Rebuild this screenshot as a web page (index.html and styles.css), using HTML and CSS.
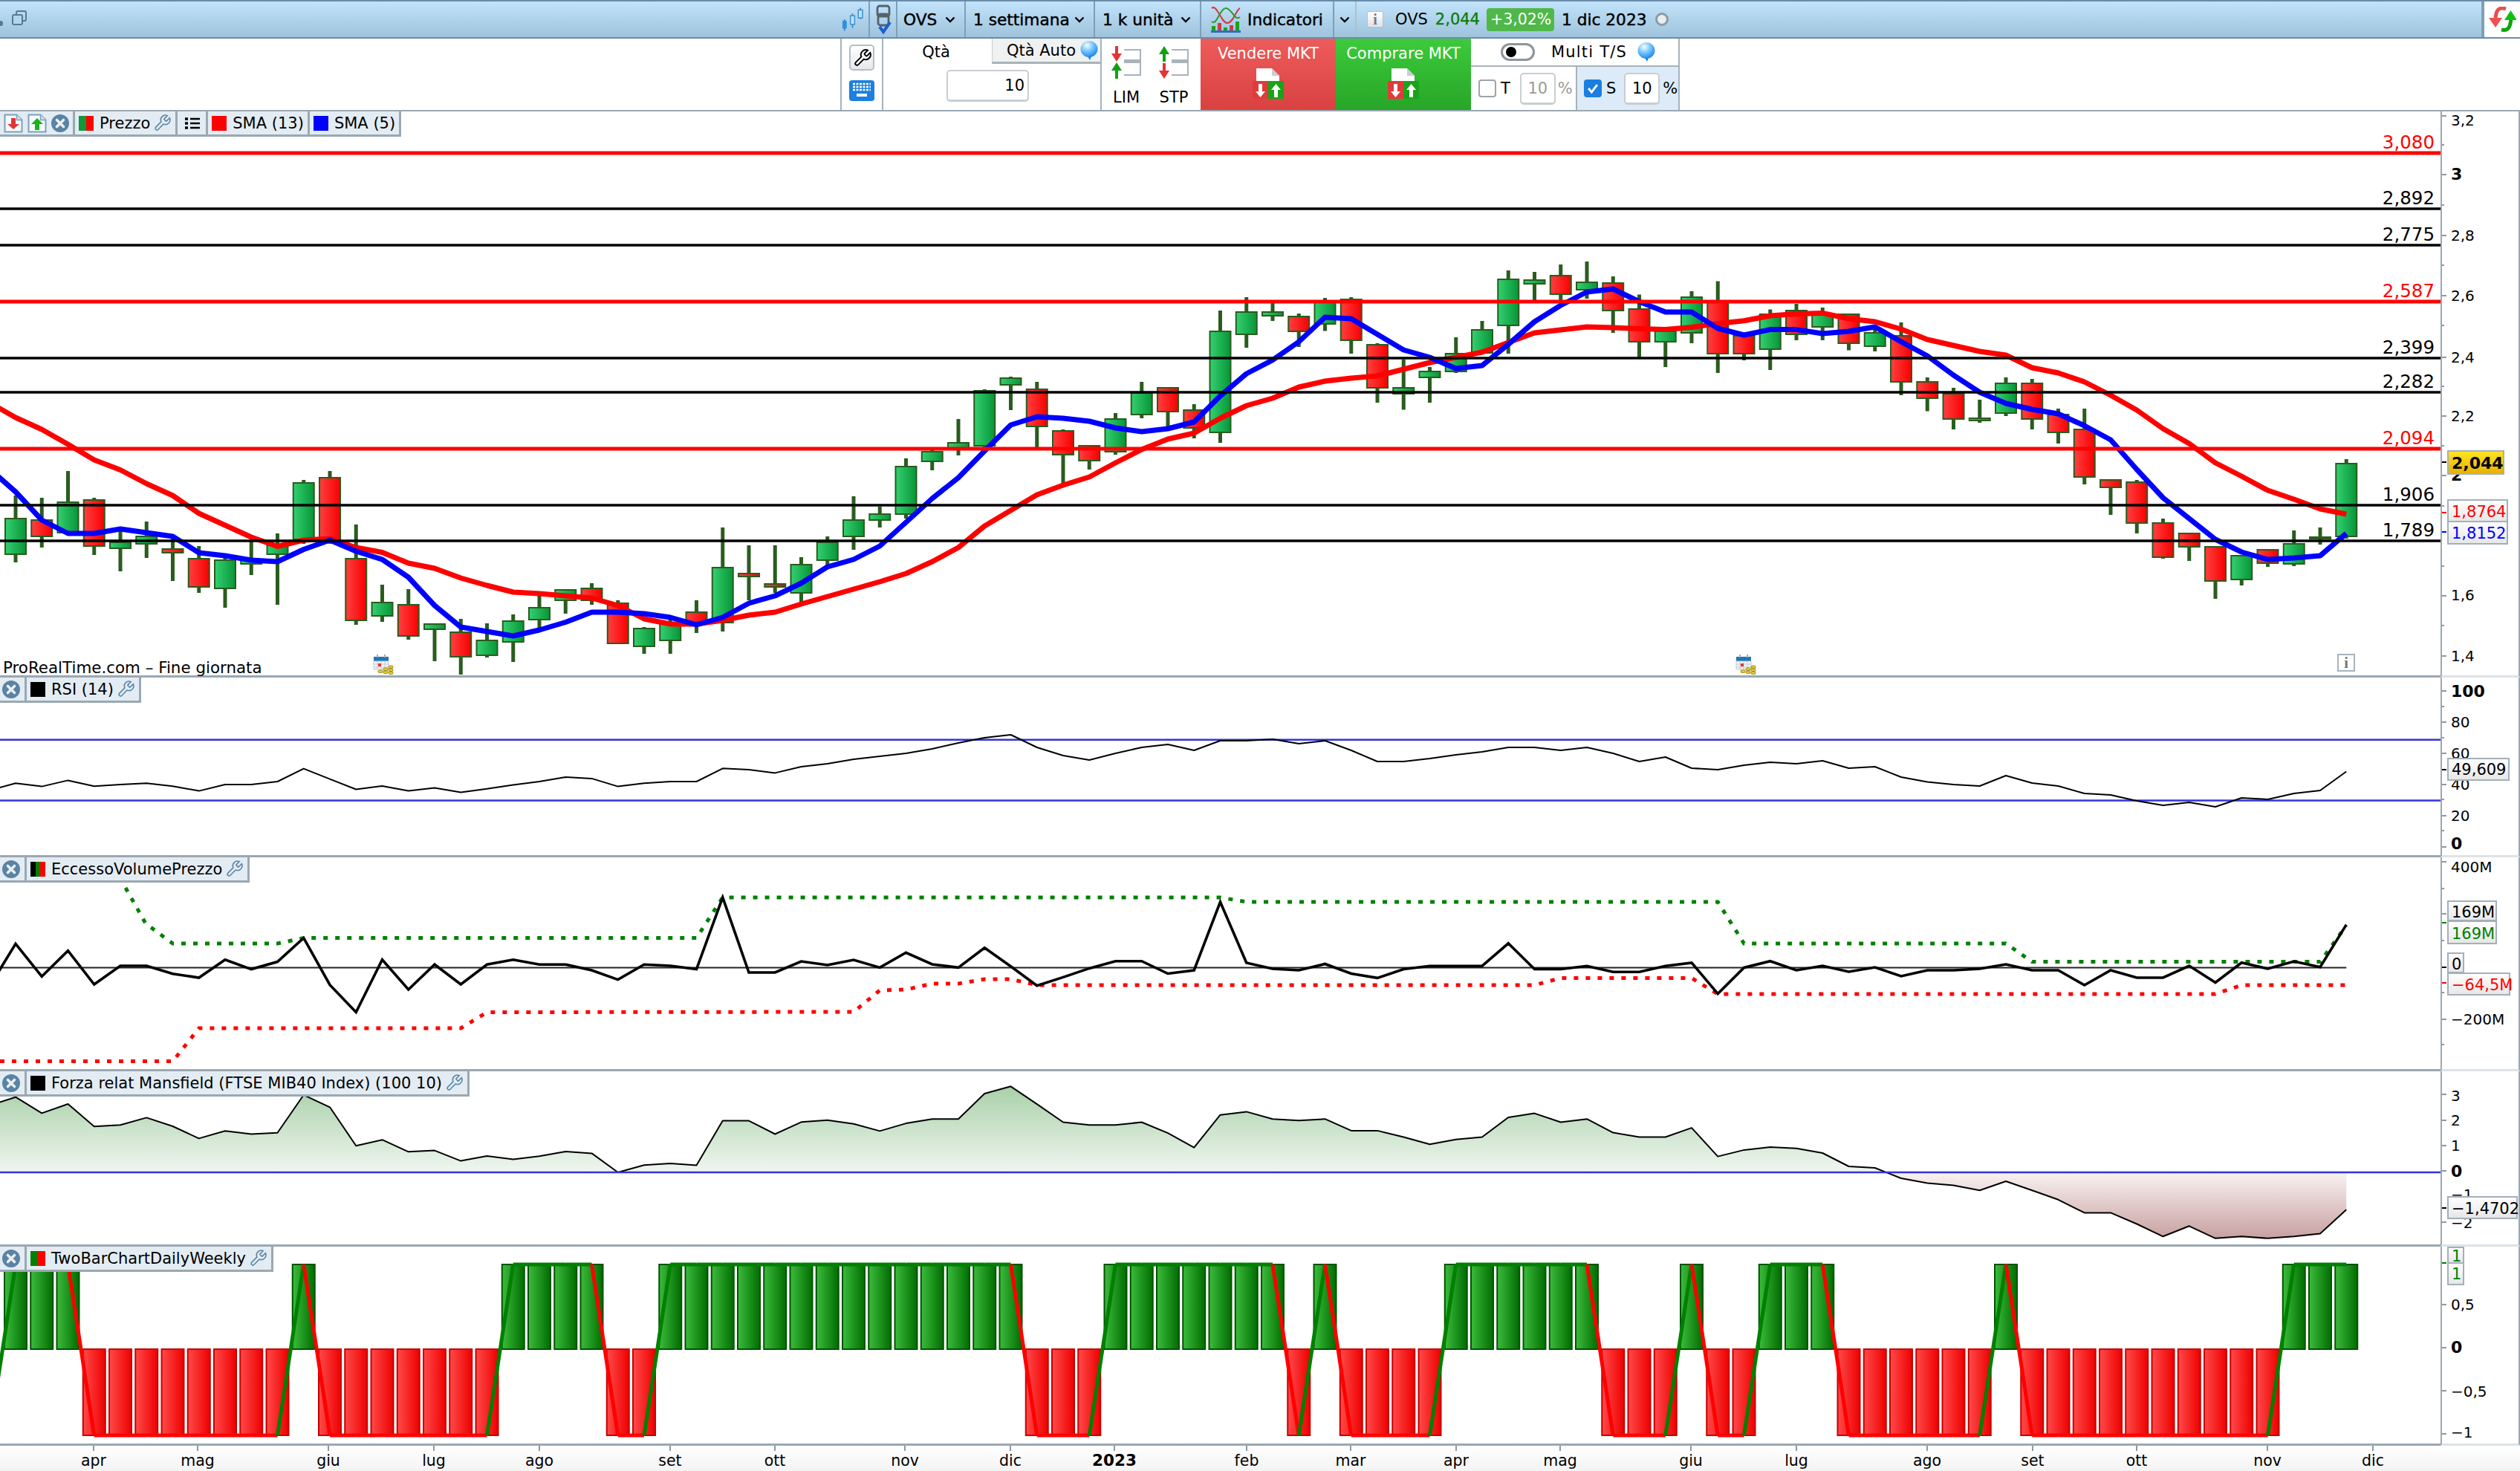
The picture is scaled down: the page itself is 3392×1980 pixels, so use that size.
FILE: index.html
```html
<!DOCTYPE html>
<html lang="it">
<head>
<meta charset="utf-8">
<title>OVS - ProRealTime</title>
<link rel="stylesheet" href="styles.css">
</head>
<body>
<svg class="defs" aria-hidden="true">
  <defs>
    <linearGradient id="g-up" x1="0" x2="1" y1="0" y2="0"><stop offset="0" stop-color="#34d071"/><stop offset="1" stop-color="#079537"/></linearGradient>
    <linearGradient id="g-down" x1="0" x2="1" y1="0" y2="0"><stop offset="0" stop-color="#ff4040"/><stop offset="1" stop-color="#f80000"/></linearGradient>
    <linearGradient id="g-bar-up" x1="0" x2="1" y1="0" y2="0"><stop offset="0" stop-color="#3cbc3c"/><stop offset="1" stop-color="#006c00"/></linearGradient>
    <linearGradient id="g-bar-down" x1="0" x2="1" y1="0" y2="0"><stop offset="0" stop-color="#ff4a4a"/><stop offset="1" stop-color="#ee0000"/></linearGradient>
    <linearGradient id="g-tag" x1="0" x2="0" y1="0" y2="1"><stop offset="0" stop-color="#ffffff"/><stop offset="1" stop-color="#e6e6e6"/></linearGradient>
    <linearGradient id="g-last" x1="0" x2="0" y1="0" y2="1"><stop offset="0" stop-color="#ffe623"/><stop offset="1" stop-color="#e6b000"/></linearGradient>
    <linearGradient id="g-pos" gradientUnits="userSpaceOnUse" x1="0" x2="0" y1="1462" y2="1578"><stop offset="0" stop-color="#a8d0a8"/><stop offset="1" stop-color="#f0f6f0"/></linearGradient>
    <linearGradient id="g-neg" gradientUnits="userSpaceOnUse" x1="0" x2="0" y1="1578" y2="1667"><stop offset="0" stop-color="#f9f2f2"/><stop offset="1" stop-color="#c8a0a0"/></linearGradient>
    <radialGradient id="g-bubble" cx="0.38" cy="0.28" r="0.8"><stop offset="0" stop-color="#ffffff"/><stop offset="0.35" stop-color="#8fd2ff"/><stop offset="1" stop-color="#0a7fe8"/></radialGradient>
    <symbol id="i-wrench" viewBox="0 0 24 24"><path d="M14.7 6.3a1 1 0 0 0 0 1.4l1.6 1.6a1 1 0 0 0 1.4 0l3.77-3.77a6 6 0 0 1-7.94 7.94l-6.91 6.91a2.12 2.12 0 0 1-3-3l6.91-6.91a6 6 0 0 1 7.94-7.94l-3.76 3.76z"/></symbol>
    <symbol id="i-close" viewBox="0 0 24 24"><circle cx="12" cy="12" r="12" fill="#5a83a4"/><path d="M7.5 7.5l9 9M16.5 7.5l-9 9" stroke="#e8eff4" stroke-width="3.6" stroke-linecap="round"/></symbol>
    <symbol id="i-doc-down" viewBox="0 0 26 26"><path d="M1.5 1.5h16l7 7v16h-23z" fill="#f6f9fb" stroke="#7ba0bd" stroke-width="2"/><path d="M17.5 1.5v7h7" fill="#d6e2ea" stroke="#7ba0bd" stroke-width="1.5"/><path d="M10 6h6v8h5l-8 7-8-7h5z" fill="#e23434"/></symbol>
    <symbol id="i-doc-up" viewBox="0 0 26 26"><path d="M1.5 1.5h16l7 7v16h-23z" fill="#f6f9fb" stroke="#7ba0bd" stroke-width="2"/><path d="M17.5 1.5v7h7" fill="#d6e2ea" stroke="#7ba0bd" stroke-width="1.5"/><path d="M13 6l8 8h-5v8h-6v-8h-5z" fill="#19b319"/></symbol>
    <symbol id="i-bubble" viewBox="0 0 24 26"><path d="M9 19l4 7 3-8z" fill="#0a7fe8"/><ellipse cx="12" cy="11" rx="11.5" ry="11" fill="url(#g-bubble)"/></symbol>
    <symbol id="i-doc-trade" viewBox="0 0 42 42"><path d="M5 1h21l10 10v16H5z" fill="#ffffff"/><path d="M5 1h21l10 10h-10V1" fill="#c9ced2"/><rect x="0" y="18" width="21" height="24" fill="#e23a3a"/><rect x="21" y="18" width="21" height="24" fill="#19a319"/><path d="M8 22h5v10h4l-6.500 8-6.500-8h4z" fill="#fff"/><path d="M31.500 22l6.500 8h-4v10h-5V30h-4z" fill="#fff"/></symbol>
  </defs>
</svg>

<header class="topbar">
  <div class="tb-cell tb-left">
    <span class="tb-dot"></span>
    <svg class="ic-window" viewBox="0 0 20 20"><rect x="6" y="1" width="13" height="13" rx="2" fill="none" stroke="#557b98" stroke-width="2"/><rect x="1" y="6" width="13" height="13" rx="2" fill="#b3d4ec" stroke="#557b98" stroke-width="2"/></svg>
    <svg class="ic-candles" viewBox="0 0 30 32"><path d="M4 16v16M15 8v20M26 0v16" stroke="#3c8fd0" stroke-width="2"/><rect x="1" y="18" width="6" height="11" fill="#2e8fe0"/><rect x="12" y="11" width="6" height="12" fill="#bfe0f8" stroke="#3c8fd0" stroke-width="1.500"/><rect x="23" y="3" width="6" height="11" fill="#bfe0f8" stroke="#3c8fd0" stroke-width="1.500"/></svg>
  </div>
  <div class="tb-cell tb-chain">
    <svg class="ic-chain" viewBox="0 0 24 40"><path d="M7 2h10a3 3 0 0 1 3 3v8a3 3 0 0 1-3 3H7a3 3 0 0 1-3-3V5a3 3 0 0 1 3-3zM8 13h8a3 3 0 0 1 3 3v9a3 3 0 0 1-3 3H8a3 3 0 0 1-3-3v-9a3 3 0 0 1 3-3z" fill="none" stroke="#56616a" stroke-width="2.800"/><path d="M7 30l5 7 9-13" fill="none" stroke="#1b5fd0" stroke-width="4"/></svg>
  </div>
  <div class="tb-cell tb-ovs"><span class="tb-strong">OVS</span><svg class="chev" viewBox="0 0 14 9"><path d="M1.500 1.500L7 7l5.500-5.500"/></svg></div>
  <div class="tb-cell tb-tf"><span class="tb-strong">1 settimana</span><svg class="chev" viewBox="0 0 14 9"><path d="M1.500 1.500L7 7l5.500-5.500"/></svg></div>
  <div class="tb-cell tb-units"><span class="tb-strong">1 k unità</span><svg class="chev" viewBox="0 0 14 9"><path d="M1.500 1.500L7 7l5.500-5.500"/></svg></div>
  <div class="tb-cell tb-ind">
    <svg class="ic-ind" viewBox="0 0 40 38"><path d="M1 4C8 -2 14 24 22 24S34 6 39 4" fill="none" stroke="#d43a3a" stroke-width="2"/><path d="M1 22C8 28 12 4 20 4S32 22 39 16" fill="none" stroke="#2d9a2d" stroke-width="2"/><rect x="1" y="28" width="5" height="6" fill="#19a319"/><rect x="9" y="24" width="5" height="10" fill="#d43a3a"/><rect x="17" y="30" width="5" height="4" fill="#19a319"/><rect x="25" y="27" width="5" height="7" fill="#d43a3a"/><rect x="33" y="22" width="5" height="12" fill="#19a319"/><rect x="0" y="34" width="40" height="3" fill="#2a6fc0"/></svg>
    <span class="tb-strong">Indicatori</span>
  </div>
  <div class="tb-cell tb-chevonly"><svg class="chev" viewBox="0 0 14 9"><path d="M1.500 1.500L7 7l5.500-5.500"/></svg></div>
  <div class="tb-cell tb-quote">
    <span class="ic-info">i</span>
    <span class="q-name">OVS</span>
    <span class="q-price">2,044</span>
    <span class="q-change">+3,02%</span>
    <span class="tb-strong">1 dic 2023</span>
    <span class="q-ring"></span>
  </div>
  <div class="tb-cell tb-refresh">
    <svg class="ic-refresh" viewBox="0 0 38 34"><path d="M24 3C15 0 10 4 10 18" fill="none" stroke="#e85050" stroke-width="5"/><path d="M1 15h18l-9 13z" fill="#f25050"/><path d="M18 31c9 2 12-3 13-15" fill="none" stroke="#08a808" stroke-width="5"/><path d="M22 18h17L30.500 5z" fill="#10c010"/></svg>
  </div>
</header>

<section class="orderbar">
  <div class="ob-cell ob-tools">
    <button class="btn-wrench"><svg class="ic-wrench-black" viewBox="0 0 24 24"><use href="#i-wrench"/></svg></button>
    <svg class="ic-keyboard" viewBox="0 0 34 28"><rect width="34" height="28" rx="4" fill="#1b80e0"/><path d="M5 5h24M5 9h24M5 13h24" stroke="#fff" stroke-width="2.400" stroke-dasharray="3 1.500"/><rect x="10" y="18" width="14" height="4" fill="#fff"/></svg>
  </div>
  <div class="ob-cell ob-qty">
    <span class="qty-label">Qtà</span>
    <div class="qty-auto">Qtà Auto<svg class="ic-bubble" viewBox="0 0 24 26"><use href="#i-bubble"/></svg></div>
    <input class="qty-input" value="10" readonly>
  </div>
  <div class="ob-cell ob-limstp">
    <div class="ls-col">
      <svg class="ic-ls" viewBox="0 0 42 44"><path d="M18 5h22v34H18" fill="none" stroke="#a8b3ba" stroke-width="2"/><path d="M18 20.500h22" stroke="#a8b3ba" stroke-width="5"/><path d="M6 0h4v10h5l-7 11-7-11h5z" fill="#e23434"/><path d="M8 22l7 11h-5v11H6V33H1z" fill="#12a012"/></svg>
      <span>LIM</span>
    </div>
    <div class="ls-col">
      <svg class="ic-ls" viewBox="0 0 42 44"><path d="M18 5h22v34H18" fill="none" stroke="#a8b3ba" stroke-width="2"/><path d="M18 20.500h22" stroke="#a8b3ba" stroke-width="5"/><path d="M8 0l7 11h-5v10H6V11H1z" fill="#12a012"/><path d="M6 23h4v10h5l-7 11-7-11h5z" fill="#e23434"/></svg>
      <span>STP</span>
    </div>
  </div>
  <div class="ob-cell ob-sell">Vendere MKT<svg class="ic-trade" viewBox="0 0 42 42"><use href="#i-doc-trade"/></svg></div>
  <div class="ob-cell ob-buy">Comprare MKT<svg class="ic-trade" viewBox="0 0 42 42"><use href="#i-doc-trade"/></svg></div>
  <div class="ob-cell ob-multi">
    <div class="multi-top">
      <span class="toggle"><span class="toggle-dot"></span></span>
      <span class="multi-label">Multi T/S</span>
      <svg class="ic-bubble" viewBox="0 0 24 26"><use href="#i-bubble"/></svg>
    </div>
    <div class="multi-bottom">
      <div class="ms-part ms-off">
        <span class="chk"></span><span>T</span><input class="pct-input" value="10" readonly><span class="pct">%</span>
      </div>
      <div class="ms-part ms-on">
        <span class="chk chk-on"><svg viewBox="0 0 24 24"><path d="M5 12l5 6 9-12" fill="none" stroke="#fff" stroke-width="3.500"/></svg></span><span>S</span><input class="pct-input" value="10" readonly><span class="pct-on">%</span>
      </div>
    </div>
  </div>
</section>

<main class="charts">
  <section class="panel panel-main">
    <div class="plot" id="plot-main"></div>
    <div class="yaxis" id="axis-main"></div>
    <div class="legend">
      <div class="lg-cell">
        <svg class="ic-doc" viewBox="0 0 26 26"><use href="#i-doc-down"/></svg>
        <svg class="ic-doc" viewBox="0 0 26 26"><use href="#i-doc-up"/></svg>
        <svg class="ic-close" viewBox="0 0 24 24"><use href="#i-close"/></svg>
      </div>
      <div class="lg-cell"><span class="sw sw-price"></span><span class="lg-name">Prezzo</span><svg class="ic-wrench" viewBox="0 0 24 24"><use href="#i-wrench"/></svg></div>
      <div class="lg-cell lg-list"><svg class="ic-list" viewBox="0 0 20 16"><path d="M0 2h4M0 8h4M0 14h4" stroke="#000" stroke-width="3.500"/><path d="M7 2h13M7 8h13M7 14h13" stroke="#000" stroke-width="2.400"/></svg></div>
      <div class="lg-cell"><span class="sw sw-red"></span><span class="lg-name">SMA (13)</span></div>
      <div class="lg-cell"><span class="sw sw-blue"></span><span class="lg-name">SMA (5)</span></div>
    </div>
    <div class="watermark">ProRealTime.com – Fine giornata</div>
  </section>

  <section class="panel panel-rsi">
    <div class="plot" id="plot-rsi"></div>
    <div class="yaxis" id="axis-rsi"></div>
    <div class="legend">
      <div class="lg-cell lg-x"><svg class="ic-close" viewBox="0 0 24 24"><use href="#i-close"/></svg></div>
      <div class="lg-cell"><span class="sw sw-black"></span><span class="lg-name">RSI (14)</span><svg class="ic-wrench" viewBox="0 0 24 24"><use href="#i-wrench"/></svg></div>
    </div>
  </section>

  <section class="panel panel-evp">
    <div class="plot" id="plot-evp"></div>
    <div class="yaxis" id="axis-evp"></div>
    <div class="legend">
      <div class="lg-cell lg-x"><svg class="ic-close" viewBox="0 0 24 24"><use href="#i-close"/></svg></div>
      <div class="lg-cell"><span class="sw sw-evp"></span><span class="lg-name">EccessoVolumePrezzo</span><svg class="ic-wrench" viewBox="0 0 24 24"><use href="#i-wrench"/></svg></div>
    </div>
  </section>

  <section class="panel panel-mans">
    <div class="plot" id="plot-mans"></div>
    <div class="yaxis" id="axis-mans"></div>
    <div class="legend">
      <div class="lg-cell lg-x"><svg class="ic-close" viewBox="0 0 24 24"><use href="#i-close"/></svg></div>
      <div class="lg-cell"><span class="sw sw-black"></span><span class="lg-name">Forza relat Mansfield (FTSE MIB40 Index) (100 10)</span><svg class="ic-wrench" viewBox="0 0 24 24"><use href="#i-wrench"/></svg></div>
    </div>
  </section>

  <section class="panel panel-two">
    <div class="plot" id="plot-two"></div>
    <div class="yaxis" id="axis-two"></div>
    <div class="legend">
      <div class="lg-cell lg-x"><svg class="ic-close" viewBox="0 0 24 24"><use href="#i-close"/></svg></div>
      <div class="lg-cell"><span class="sw sw-two"></span><span class="lg-name">TwoBarChartDailyWeekly</span><svg class="ic-wrench" viewBox="0 0 24 24"><use href="#i-wrench"/></svg></div>
    </div>
  </section>

  <div class="timeaxis" id="time-axis"></div>
</main>
<script src="chart.js"></script>
</body>
</html>
```

FILE: styles.css
```css
* { box-sizing: border-box; }
html, body { margin: 0; padding: 0; background: #fff; }
body {
  width: 3392px; height: 1980px; overflow: hidden;
  display: flex; flex-direction: column;
  font: 21px "DejaVu Sans", "Liberation Sans", sans-serif; color: #000;
}
.defs { position: absolute; width: 0; height: 0; }

/* top bar */
.topbar {
  display: flex; height: 52px; flex: none;
  border-top: 2px solid #6b8ca8; border-bottom: 2px solid #6b8ca8;
  background: linear-gradient(#c1e3fb, #9fc3dc);
}
.tb-cell { display: flex; align-items: center; height: 100%; border-right: 2px solid #7e9fb8; flex: none; }
.tb-strong { -webkit-text-stroke: 0.45px #000; font-size: 21.7px; white-space: nowrap; }
.tb-left { width: 1171px; padding-right: 7px; }
.tb-dot { width: 4px; height: 7px; background: #557b98; border-radius: 0 3px 3px 0; margin: 10px 12px 0 0; }
.ic-window { width: 20px; height: 20px; margin-bottom: 4px; }
.ic-candles { width: 29px; height: 32px; margin-left: auto; }
.tb-chain { width: 37px; justify-content: center; }
.ic-chain { width: 24px; height: 40px; }
.tb-ovs { width: 92px; padding-left: 8px; }
.tb-tf { width: 174px; padding-left: 10px; }
.tb-units { width: 143px; padding-left: 10px; }
.chev { width: 14px; height: 9px; margin-left: auto; margin-right: 12px; flex: none; }
.chev path { fill: none; stroke: #000; stroke-width: 2.4; }
.tb-ind { width: 179px; padding-left: 13px; gap: 9px; }
.ic-ind { width: 40px; height: 38px; }
.tb-chevonly { width: 30px; border-right-color: #adbfcd; }
.tb-chevonly .chev { margin: 0 auto; }
.tb-quote { flex: 1; padding-left: 14px; }
.ic-info {
  width: 22px; height: 22px; background: linear-gradient(#fff, #dfe3e6); border: 1px solid #b7c0c6; border-radius: 2px;
  font: bold 20px/20px "Liberation Serif", serif; color: #778; text-align: center;
}
.q-name { margin-left: 16px; }
.q-price { margin-left: 10px; color: #0a7d0a; -webkit-text-stroke: 0.35px #0a7d0a; }
.q-change {
  margin-left: 9px; padding: 0 5px; height: 31px; line-height: 31px; width: 91px; text-align: center;
  background: #4fb848; color: #fff; border-radius: 4px; font-size: 20.5px; white-space: nowrap;
}
.tb-quote .tb-strong { margin-left: 10px; }
.q-ring { width: 18px; height: 18px; margin-left: 12px; border-radius: 50%; border: 3px solid #8d9aa3; background: #e9eef1; }
.tb-refresh { width: 50px; background: #fff; border-left: 2px solid #7e9fb8; border-right: 0; justify-content: center; }
.ic-refresh { width: 38px; height: 34px; }

/* order bar */
.orderbar { display: flex; justify-content: center; height: 98px; flex: none; border-bottom: 2px solid #9aa8b2; background: #fff; }
.ob-cell { height: 96px; flex: none; }
.ob-tools { width: 58px; border-left: 2px solid #a7b3bb; border-right: 2px solid #a7b3bb; display: flex; flex-direction: column; align-items: center; padding-top: 8px; gap: 13px; }
.btn-wrench { width: 34px; height: 35px; padding: 3px; background: linear-gradient(#fff, #e6e8ea); border: 2px solid #b5bec4; border-radius: 5px; display: block; }
.ic-wrench-black { width: 26px; height: 26px; display: block; fill: #fff; stroke: #000; stroke-width: 1.8; }
.ic-keyboard { width: 34px; height: 28px; }
.ob-qty { width: 294px; border-right: 2px solid #a7b3bb; display: grid; grid-template-columns: 146px 146px; grid-template-rows: 34px 1fr; }
.qty-label { align-self: center; justify-self: center; margin: 2px 4px 0 0; }
.qty-auto {
  display: flex; align-items: center; justify-content: flex-end; gap: 6px; padding-right: 3px;
  background: #f0f1f1; border-bottom: 3px solid #a7b3bb; border-left: 1px solid #c8ced2; white-space: nowrap; font-size: 21px;
}
.ic-bubble { width: 24px; height: 26px; flex: none; }
.qty-input {
  grid-column: 1 / 3; width: 111px; height: 43px; margin: 8px 0 0 85px; text-align: right; padding: 0 4px 0 0;
  font: 21px "DejaVu Sans", sans-serif; color: #000; background: #fff; border: 2px solid #c8ced2; border-bottom-width: 3px; border-radius: 5px; outline: 0;
}
.ob-limstp { width: 133px; display: flex; padding: 10px 12px 0; gap: 22px; }
.ls-col { width: 42px; display: flex; flex-direction: column; align-items: center; gap: 13px; font-size: 21px; }
.ic-ls { width: 42px; height: 44px; flex: none; }
.ob-sell, .ob-buy { width: 182px; display: flex; flex-direction: column; align-items: center; padding-top: 8px; color: #fff; gap: 7px; white-space: nowrap; }
.ob-sell { background: linear-gradient(#ee5b5b, #d94141); }
.ob-buy { background: linear-gradient(#3ccb3c, #27a527); }
.ic-trade { width: 42px; height: 42px; }
.ob-multi { width: 281px; border-right: 2px solid #a7b3bb; display: flex; flex-direction: column; }
.multi-top { flex: none; display: flex; align-items: center; padding-left: 40px; border-bottom: 2px solid #a7b3bb; height: 38px; }
.toggle { width: 46px; height: 24px; border: 3px solid #8d959b; border-radius: 12px; background: #fff; display: flex; align-items: center; padding-left: 4px; }
.toggle-dot { width: 14px; height: 14px; background: #000; border-radius: 50%; }
.multi-label { margin-left: 22px; margin-right: 14px; letter-spacing: 1.2px; white-space: nowrap; }
.multi-bottom { flex: 1; display: flex; }
.ms-part { display: flex; align-items: center; }
.ms-off { width: 141px; padding-left: 10px; gap: 6px; }
.ms-on { flex: 1; background: #dcebf7; border-left: 2px solid #a7b3bb; padding-left: 9px; gap: 6px; }
.chk { width: 24px; height: 24px; flex: none; border: 2px solid #9aa5ac; border-radius: 4px; background: #fff; }
.chk-on { background: #1b7fe0; border-color: #1b7fe0; padding: 0; }
.chk-on svg { display: block; width: 20px; height: 20px; }
.pct-input { width: 48px; height: 43px; text-align: center; padding: 0; font: 21px "DejaVu Sans", sans-serif; background: #fff; border: 2px solid #c8ced2; border-radius: 5px; border-bottom-width: 3px; outline: 0; margin-left: 7px; }
.ms-off .pct-input { color: #9a9a9a; }
.ms-off .pct { color: #9a9a9a; margin-left: -3px; }
.ms-on .pct-input { color: #000; margin-left: 5px; }
.pct-on { margin-left: -2px; }

/* chart panels */
.charts { flex: 1; display: flex; flex-direction: column; }
.panel { display: flex; position: relative; flex: none; }
.panel-main { height: 762px; }
.panel-rsi { height: 242px; }
.panel-evp { height: 288px; }
.panel-mans { height: 236px; }
.panel-two { height: 268px; }
.plot { width: 3285px; flex: none; border-bottom: 3px solid #9aa8b2; }
.yaxis { flex: 1; border-left: 2px solid #9aa8b2; border-right: 2px solid #9aa8b2; border-bottom: 3px solid #dde3e7; }
.plot svg, .yaxis svg, .timeaxis svg { display: block; width: 100%; height: 100%; }
.timeaxis { flex: 1; background: linear-gradient(#fff, #f3f3f3); }

/* legends */
.legend { position: absolute; top: 0; left: 0; display: flex; height: 34px; background: #e3ecf3; border-bottom: 3px solid #9aa8b2; border-right: 3px solid #9aa8b2; }
.lg-cell { display: flex; align-items: center; padding: 0 5px; white-space: nowrap; }
.lg-cell + .lg-cell { border-left: 3px solid #9aa8b2; }
.lg-x { padding: 0 5px 0 3px; width: 33px; }
.lg-list { padding: 0 8px 0 10px; }
.ic-doc { width: 26px; height: 26px; margin-right: 6px; flex: none; }
.ic-close { width: 24px; height: 24px; flex: none; }
.ic-wrench { width: 25px; height: 25px; margin-left: 4px; fill: none; stroke: #5d87a8; stroke-width: 1.6; flex: none; }
.ic-list { width: 20px; height: 16px; }
.sw { width: 20px; height: 20px; flex: none; margin-right: 8px; }
.sw-price { background: linear-gradient(90deg, #0f9a3a 50%, #ff0000 50%); }
.sw-red { background: #ff0000; }
.sw-blue { background: #0000ff; }
.sw-black { background: #000; }
.sw-evp { background: linear-gradient(90deg, #000 33%, #008000 33%, #008000 66%, #ff0000 66%); }
.sw-two { background: linear-gradient(90deg, #008000 50%, #ff0000 50%); }
.watermark { position: absolute; left: 4px; top: 736px; font-size: 21.4px; white-space: nowrap; }

/* svg chart items */
.wick { fill: #2a5c1e; }
.body { stroke: #2a5c1e; stroke-width: 2; }
.hline-red { stroke: #ff0000; stroke-width: 5; }
.hline-black { stroke: #000; stroke-width: 3.4; }
.sma { fill: none; stroke-width: 7; stroke-linejoin: round; }
.sma-red { stroke: #ff0000; }
.sma-blue { stroke: #0000ff; }
.level { font-size: 24.5px; text-anchor: end; fill: #000; }
.level-red { fill: #ff0000; }
.tick { stroke: #8d9aa4; stroke-width: 2; }
.tick-black { stroke: #000; }
.tick-red { stroke: #ff0000; }
.tick-blue { stroke: #0000ff; }
.tick-green { stroke: #008000; }
.ax { font-size: 20px; fill: #000; }
.ax-bold { font-weight: bold; font-size: 22px; }
.tag-box { stroke: #a3b0ba; stroke-width: 2; }
.tag { font-size: 21px; fill: #000; }
.tag-last { font-weight: bold; font-size: 22px; }
.t-red { fill: #ff0000; }
.t-blue { fill: #0000ff; }
.t-green { fill: #008000; }
.guide { stroke: #3333dd; stroke-width: 2.4; }
.line-thin { fill: none; stroke: #000; stroke-width: 2; stroke-linejoin: round; }
.line-evp { fill: none; stroke: #000; stroke-width: 3.6; stroke-linejoin: miter; }
.zero { stroke: #222; stroke-width: 2; }
.dots { fill: none; stroke-width: 5; stroke-dasharray: 6 10; }
.dots-green { stroke: #008000; }
.dots-red { stroke: #ff0000; }
.bar-up { stroke: #005400; stroke-width: 2; }
.bar-down { stroke: #c80000; stroke-width: 2; }
.sig { fill: none; stroke-width: 5; }
.sig-up { stroke: #008000; }
.sig-down { stroke: #ff0000; }
.time-label { font-size: 20.5px; text-anchor: middle; fill: #000; }
.time-label-bold { font-weight: bold; font-size: 21.5px; }
.info-box { fill: #fff; stroke: #a7b3bb; stroke-width: 2; }
.info-i { font: bold 20px "Liberation Serif", serif; fill: #6b7780; text-anchor: middle; }
```

FILE: chart.js
```js
// Weekly OVS data in page pixels, one entry per candle.
var X = function (i) { return 21 + 35.25 * i; };
var G = 1, R = 0;

// high, body top, body bottom, low, up/down
var candles = [
[667,698,746,757,G],[670,700,722,737,R],[634,676,717,717,G],[670,673,735,747,R],[712,730,738,769,G],
[702,722,732,751,G],[720,739,744,782,R],[735,752,790,798,R],[745,754,792,818,G],[727,754,759,774,G],
[718,734,746,814,G],[646,650,726,732,G],[634,643,730,732,R],[706,752,835,841,R],[787,811,829,837,G],
[793,814,856,861,R],[839,840,847,890,G],[833,851,884,908,R],[839,862,882,885,G],[827,836,864,891,G],
[802,818,834,851,G],[793,794,808,826,G],[785,792,808,814,R],[808,812,866,867,R],[844,846,870,880,G],
[832,839,862,880,G],[808,824,840,852,R],[710,764,838,850,G],[734,772,776,808,R],[734,786,790,798,R],
[750,760,798,811,G],[722,730,754,762,G],[668,700,722,740,G],[682,692,700,710,G],[617,628,692,698,G],
[604,608,621,633,G],[564,596,604,613,G],[524,526,600,603,G],[507,509,518,552,G],[514,524,574,604,R],
[578,580,612,650,R],[599,600,620,632,R],[556,564,608,612,G],[514,529,558,563,G],[522,522,554,575,R],
[544,552,576,590,R],[418,446,582,596,G],[400,420,450,468,G],[404,420,425,432,G],[422,426,446,467,R],
[401,406,436,445.5,G],[400,403,458,476,R],[462,464,522,542,R],[484,522,530,551.5,G],[494,500,508,542,G],
[454,476,500,502,G],[432,444,475,477,G],[364,376,438,476,G],[366,377,382,404,G],[356,371,396,410,R],
[352,380,390,402,G],[372,381,418,448,R],[396.5,416,460,481,R],[440,446,460,494,G],[392,400,448,462,G],
[378.5,406,476,502,R],[450,452,476,485,R],[416.5,423,470,498,G],[409,418,450,458,R],[414,423,440,458,G],
[422,423,462,471.5,R],[442,448,466,473,G],[434,452,514,532,R],[508,514,536,553.5,R],[522,530,564,578,R],
[538,563,566,569,G],[508,516,556,560,G],[510,516,564,578,R],[550,558,582,597,R],[550,578,642,652,R],
[646,646,656,693,R],[646,649,704,718,R],[698,704,750,752,R],[718,718,736,755,R],[735,736,782,806,R],
[747,748,780,788,G],[740,740,758,763,R],[714,732,759,762,G],[710,723,725,733,G],[618,624,722,725,G]
];

// Moving averages; first value is one bar before the visible range.
var smaRed = [542,562,578,598,619,632.5,651,667,691,707,723,735.5,727,725,737,743.5,758,765,778,788,797,799,802,805,
815,833,840,840,835,828,824,813,803,793,783,772,756,737,708,687,666,653,642,623,605,591,583,563,546,
536,521,513,509,506,497,488,481,474,461,448,444,440,441,442.5,443.6,440.5,435.6,431.7,425,422.6,421.4,429,433,443,457,
465,473,478,495,502,514,532,552,577,597,623,641,660,672,685,692];
var smaBlue = [631,662,700,718,718,712,717,722,744,748,754,756,739.5,727,742,753,777,815,844,850,856,848,837.5,824,
824,826,831,841,831,812,802,785,763,753,735,703,671,643,607,572,561,563,567,576,581,577,568,533,503,
484.6,460,427,429,450,471,481,496,492,463.5,433,411,393,389,406,420,420,442,451,443.6,443.6,449,446,440,460,479,
505,528,543,551,557,573,592,632,670,698,726,743,753,751,748,718];

var rsi = [1064,1054.3,1058.6,1050.4,1058.2,1056,1054.3,1058.2,1064.6,1056,1056,1052,1034.6,1048.6,1062.5,1057.9,1064.6,1060.4,1066.4,1061.8,1056.4,1052,1046,1047.9,1058.6,1054.3,1052,1052,1034.3,1036,1040.4,1032,1027.9,
1022,1018,1014,1008,1000,993,989,1006,1017,1023,1014,1006,1002,1010,997,997,995,1001,997,1010,1025,1025,1021,1016,1012,1006,1006,1010,1006,1014,1025,1019,1034,1036,1030,1026,
1028,1024,1034,1032,1046,1052.5,1056,1058,1044,1054,1058,1068,1070,1078,1084,1080,1086,1074,1076,1068,1064,1038.5];

var evp = [1328,1270.4,1314.3,1279.6,1325,1300,1300,1310.7,1316,1291.8,1304.6,1294.6,1262.5,1325.7,1362.5,1291.8,1332,1298.2,1325,1298.2,1291.8,1298.2,1298.2,1306,1318.6,1298.2,1300,1304.6,1207.9,1309,1309,1294,
1299,1292,1302.4,1282.3,1298,1302.4,1275.8,1300.7,1326.7,1315.4,1303.4,1293.7,1293.7,1310.5,1306,1214,1295.9,1304,1306,1297.5,1310.5,1316.4,1304.5,1300.2,1300.2,1300.2,1269.8,1304.5,1304.5,1300.2,1308.3,1308.3,1300.2,1295.9,1337.6,1302.4,1293.7,
1306,1300,1308,1302,1314,1306,1306,1304,1298,1306,1306,1326,1306,1316,1316,1300,1322.5,1295.7,1304,1294,1301.8,1244.6];

var evpUpper = [[169,1195],[196,1243],[X(6),1270],[X(10),1270],[X(11),1262.5],[X(26),1262.5],[X(27),1208],[X(46),1208],[X(47),1214],[X(65),1214],[X(66),1270],[X(76),1270],[X(77),1294.6],[X(88),1294.6],[X(89),1245.7]];
var evpLower = [[0,1428.6],[X(6),1428.6],[X(7),1384],[X(17),1384],[X(18),1362.5],[X(32),1362],[X(33),1333],[X(34),1332],[X(35),1324],[X(36),1324],[X(37),1318],[X(38),1318],[X(39),1326],[X(58),1326],[X(59),1316.5],[X(64),1316.5],[X(65),1338],[X(84),1338],[X(85),1326],[X(89),1326]];

var mansfield = [1488,1476.7,1498.4,1486,1516.3,1514.2,1504.4,1516,1532.4,1522.2,1526.5,1524.7,1473.8,1490.3,1542.2,1534.2,1550.3,1548.6,1562.6,1556,1560.5,1556.3,1550,1552.4,1578,1568.2,1566,1568.5,1508.6,1508.6,1526.5,1510.3,
1507.8,1512.7,1522.4,1512.1,1506.2,1506.2,1472,1462.3,1486.1,1510.5,1514.3,1514.3,1510.5,1525.1,1544.6,1500.7,1496.4,1506.2,1508.3,1506.2,1521.9,1521.9,1530.5,1540.3,1533.8,1530.5,1504,1498.6,1510.5,1506.2,1524.6,1530.5,1530.5,1518.1,1556.6,1547.9,1544.1,
1545.7,1552,1570,1572,1586,1592.4,1595.6,1602.2,1590,1602.2,1614.8,1632.4,1632.4,1647.5,1664.3,1650.3,1666.8,1664.3,1666.8,1664.3,1660.4,1628.2];

// Run lengths of the two-bar signal, starting with up.
var runs = [3,8,1,7,4,2,14,3,7,1,1,4,6,3,1,2,3,6,1,10,3];

function seriesPts(a) { return a.map(function (y, k) { return X(k - 1).toFixed(2) + ',' + y; }).join(' '); }
function pairPts(a) { return a.map(function (p) { return p[0].toFixed(2) + ',' + p[1]; }).join(' '); }
function line(x1, y1, x2, y2, c) { return '<line x1="' + x1 + '" y1="' + y1 + '" x2="' + x2 + '" y2="' + y2 + '" class="' + c + '"/>'; }
function text(x, y, s, c) { return '<text x="' + x + '" y="' + y + '" class="' + c + '">' + s + '</text>'; }

function mount(id, markup) {
  var host = document.getElementById(id), r = host.getBoundingClientRect();
  var left = r.left + host.clientLeft, top = r.top + host.clientTop;
  var w = host.clientWidth, h = host.clientHeight;
  host.innerHTML = '<svg xmlns="http://www.w3.org/2000/svg" viewBox="' + left + ' ' + top + ' ' + w + ' ' + h + '">' + markup + '</svg>';
}

function calendar(x, y) {
  var s = '<g transform="translate(' + x + ' ' + y + ')">';
  s += '<rect x="0" y="3" width="20" height="6" fill="#1f77b4"/><rect x="4" y="0" width="2" height="4" fill="#aab"/><rect x="14" y="0" width="2" height="4" fill="#aab"/>';
  s += '<rect x="0" y="9" width="20" height="11" fill="#f2f4f6" stroke="#c4ccd2"/><path d="M5 9v11M10 9v11M15 9v11M0 13h20M0 17h20" stroke="#c4ccd2"/><rect x="6" y="12" width="4" height="4" fill="#f03030"/>';
  [[9,21,1],[16,18,2],[23,15,3]].forEach(function (c) {
    for (var k = 0; k < c[2]; k++) s += '<rect x="' + (c[0] - 3) + '" y="' + (c[1] + k * 4) + '" width="6" height="3.500" rx="1.500" fill="#e8c82a" stroke="#8a7a10" stroke-width="0.800"/>';
  });
  return s + '</g>';
}

// tags: box top, width, height, text, colour class, extra class, text baseline
function axis(ticks, labels, tags) {
  var s = '';
  ticks.forEach(function (t) { s += line(3287, t[0], t[1] ? 3293 : 3290, t[0], 'tick ' + (t[2] || '')); });
  labels.forEach(function (l) { s += text(3299, l[0], l[1], l[2] ? 'ax ax-bold' : 'ax'); });
  (tags || []).forEach(function (t) {
    s += '<rect x="3295" y="' + t[0] + '" width="' + t[1] + '" height="' + t[2] + '" fill="url(#' + (t[5] === 'tag-last' ? 'g-last' : 'g-tag') + ')" class="tag-box"/>';
    s += text(3300, t[6], t[3], 'tag ' + (t[4] || '') + ' ' + (t[5] || ''));
  });
  return s;
}

/* main price chart */
(function () {
  var s = '';
  candles.forEach(function (c, i) {
    var x = X(i);
    s += '<rect x="' + (x - 2.5) + '" y="' + c[0] + '" width="5" height="' + (c[3] - c[0]) + '" class="wick"/>';
    s += '<rect x="' + (x - 14) + '" y="' + c[1] + '" width="28" height="' + (c[2] - c[1]) + '" class="body" fill="url(#' + (c[4] ? 'g-up' : 'g-down') + ')"/>';
  });
  s += '<polyline points="' + seriesPts(smaRed) + '" class="sma sma-red"/>';
  s += '<polyline points="' + seriesPts(smaBlue) + '" class="sma sma-blue"/>';
  [[206, 1, '3,080'], [281, 0, '2,892'], [330, 0, '2,775'], [406, 1, '2,587'], [482, 0, '2,399'], [528, 0, '2,282'], [604, 1, '2,094'], [680, 0, '1,906'], [728, 0, '1,789']].forEach(function (l) {
    s += line(0, l[0], 3285, l[0], l[1] ? 'hline-red' : 'hline-black');
    s += text(3277, l[0] - 6, l[2], l[1] ? 'level level-red' : 'level');
  });
  s += calendar(503, 881) + calendar(2337, 881);
  s += '<rect x="3147" y="881" width="22" height="22" class="info-box"/>' + text(3158, 899, 'i', 'info-i');
  mount('plot-main', s);

  mount('axis-main', axis(
    [[156,1],[195,0],[235,1],[276,0],[317,1],[357,0],[398,1],[438,0],[481,1],[520,0],[560,1],[600,0],[640,1],[622,1,'tick-black'],[690,1,'tick-red'],[716,1,'tick-blue'],[681,0],[762,0],[802,1],[842,0],[883,1]],
    [[169,'3,2'],[242,'3',1],[324,'2,8'],[405,'2,6'],[488,'2,4'],[567,'2,2'],[647,'2',1],[808,'1,6'],[890,'1,4']],
    [[607,75,31,'2,044','','tag-last',631],[673,80,29,'1,8764','t-red','',696],[702,80,30,'1,8152','t-blue','',725]]
  ));
})();

/* RSI */
(function () {
  var s = line(0, 995.7, 3285, 995.7, 'guide') + line(0, 1077.5, 3285, 1077.5, 'guide');
  s += '<polyline points="' + seriesPts(rsi) + '" class="line-thin"/>';
  mount('plot-rsi', s);
  mount('axis-rsi', axis(
    [[930,1],[951,0],[972,1],[993,0],[1014,1],[1036,1,'tick-black'],[1056,1],[1076,0],[1098,1],[1118,0],[1140,1]],
    [[938,'100',1],[979,'80'],[1021,'60'],[1063,'40'],[1105,'20'],[1143,'0',1]],
    [[1021,82,29,'49,609','','',1043]]
  ));
})();

/* Eccesso volume prezzo */
(function () {
  var s = line(0, 1302.5, X(89), 1302.5, 'zero');
  s += '<polyline points="' + pairPts(evpUpper) + '" class="dots dots-green"/>';
  s += '<polyline points="' + pairPts(evpLower) + '" class="dots dots-red"/>';
  s += '<polyline points="' + seriesPts(evp) + '" class="line-evp"/>';
  mount('plot-evp', s);
  mount('axis-evp', axis(
    [[1160,1],[1196,0],[1230,1],[1266,0],[1302,1,'tick-black'],[1323,1,'tick-red'],[1242,1,'tick-green'],[1336,0],[1372,1],[1406,0]],
    [[1174,'400M'],[1379,'−200M']],
    [[1213,65,26,'169M','','',1235],[1240,65,30,'169M','t-green','',1264],[1283,21,26,'0','','',1305],[1310,83,29,'−64,5M','t-red','',1333]]
  ));
})();

/* Mansfield */
(function () {
  var area = 'M' + X(-1) + ' 1578 L' + mansfield.map(function (y, k) { return X(k - 1).toFixed(2) + ' ' + y; }).join(' L') + ' L' + X(89) + ' 1578 Z';
  var s = '<clipPath id="mans-area"><path d="' + area + '"/></clipPath>';
  s += '<rect x="0" y="1442" width="3285" height="136" fill="url(#g-pos)" clip-path="url(#mans-area)"/>';
  s += '<rect x="0" y="1578" width="3285" height="100" fill="url(#g-neg)" clip-path="url(#mans-area)"/>';
  s += '<polyline points="' + seriesPts(mansfield) + '" class="line-thin"/>';
  s += line(0, 1578, 3285, 1578, 'guide');
  mount('plot-mans', s);
  mount('axis-mans', axis(
    [[1473,1],[1508,1],[1542,1],[1576,1],[1626,1,'tick-black'],[1645,1]],
    [[1482,'3'],[1515,'2'],[1549,'1'],[1584,'0',1],[1615,'−1'],[1653,'−2']],
    [[1611,93,29,'−1,4702','','',1634]]
  ));
})();

/* Two bar chart */
(function () {
  var signs = [];
  runs.forEach(function (n, k) { for (var j = 0; j < n; j++) signs.push(k % 2 === 0 ? 1 : -1); });
  var s = '';
  signs.forEach(function (v, i) {
    s += v > 0
      ? '<rect x="' + (X(i) - 15) + '" y="1702" width="30" height="114" class="bar-up" fill="url(#g-bar-up)"/>'
      : '<rect x="' + (X(i) - 15) + '" y="1816" width="30" height="116" class="bar-down" fill="url(#g-bar-down)"/>';
  });
  var prevX = X(-1), prevY = 1932;
  signs.forEach(function (v, i) {
    var y = v > 0 ? 1702 : 1932;
    s += line(prevX.toFixed(2), prevY, X(i).toFixed(2), y, 'sig ' + (v > 0 ? 'sig-up' : 'sig-down'));
    prevX = X(i); prevY = y;
  });
  mount('plot-two', s);
  mount('axis-two', axis(
    [[1700,1,'tick-green'],[1756,1],[1814,1],[1872,1],[1930,1]],
    [[1763,'0,5'],[1821,'0',1],[1880,'−0,5'],[1935,'−1']],
    [[1679,21,21,'1','t-green','',1698],[1700,21,29,'1','t-green','',1722]]
  ));
})();

/* time axis */
(function () {
  var s = '';
  [['apr',126],['mag',266],['giu',442],['lug',584],['ago',726],['set',902],['ott',1043],['nov',1218],['dic',1360],['2023',1500,1],['feb',1678],['mar',1818],['apr',1960],['mag',2100],['giu',2276],['lug',2418],['ago',2594],['set',2736],['ott',2876],['nov',3052],['dic',3194]].forEach(function (t) {
    s += line(t[1], 1946, t[1], 1953, 'tick');
    s += text(t[1], 1973, t[0], t[2] ? 'time-label time-label-bold' : 'time-label');
  });
  mount('time-axis', s);
})();
```
